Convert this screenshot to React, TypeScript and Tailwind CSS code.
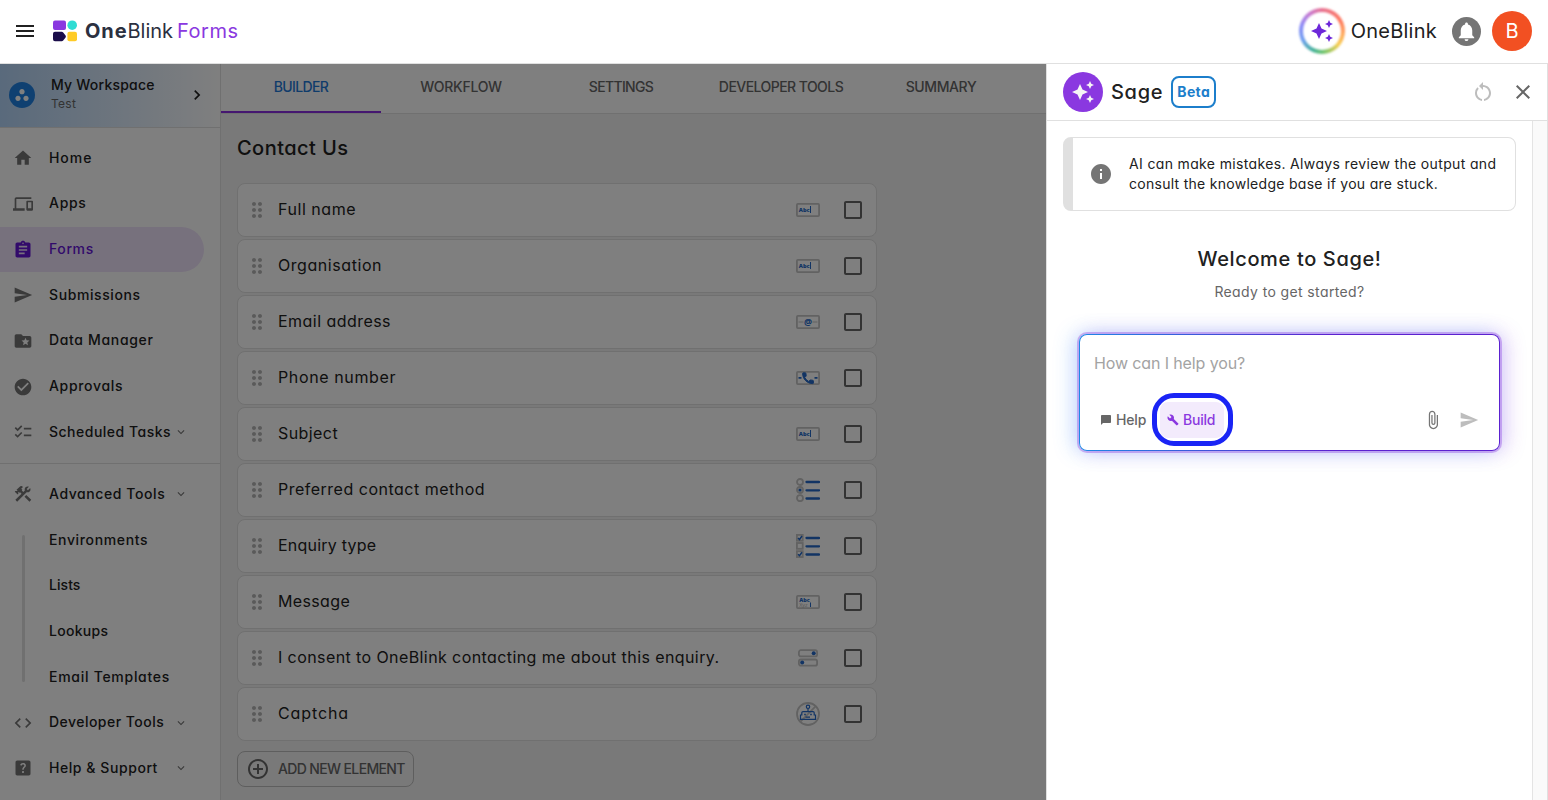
import type { ReactNode } from "react";
import type { IconType } from "react-icons";
import {
  MdAddCircleOutline,
  MdAssignment,
  MdAttachFile,
  MdAutoAwesome,
  MdBuild,
  MdChatBubble,
  MdCheckBoxOutlineBlank,
  MdCheckCircle,
  MdChecklist,
  MdChevronRight,
  MdClose,
  MdCode,
  MdConstruction,
  MdDevices,
  MdDragIndicator,
  MdExpandMore,
  MdFolderSpecial,
  MdHelpCenter,
  MdHome,
  MdInfo,
  MdMenu,
  MdNotifications,
  MdRestartAlt,
  MdSend,
  MdWorkspaces,
} from "react-icons/md";

type NavEntry = { label: string; tracking: string; icon?: IconType; active?: boolean; expandable?: boolean };

const primaryNav: NavEntry[] = [
  { label: "Home", tracking: "tracking-[0.95px]", icon: MdHome },
  { label: "Apps", tracking: "tracking-[0.7px]", icon: MdDevices },
  { label: "Forms", tracking: "tracking-[0.6px]", icon: MdAssignment, active: true },
  { label: "Submissions", tracking: "tracking-[0.6px]", icon: MdSend },
  { label: "Data Manager", tracking: "tracking-[0.66px]", icon: MdFolderSpecial },
  { label: "Approvals", tracking: "tracking-[0.68px]", icon: MdCheckCircle },
  { label: "Scheduled Tasks", tracking: "tracking-[0.5px]", icon: MdChecklist, expandable: true },
];

const advancedChildren: NavEntry[] = [
  { label: "Environments", tracking: "tracking-[0.64px]" },
  { label: "Lists", tracking: "tracking-[0.05px]" },
  { label: "Lookups", tracking: "tracking-[0.3px]" },
  { label: "Email Templates", tracking: "tracking-[0.72px]" },
];

const tabs = [
  { label: "BUILDER", tracking: "tracking-[-0.64px]", active: true },
  { label: "WORKFLOW", tracking: "tracking-[-0.28px]" },
  { label: "SETTINGS", tracking: "tracking-[-0.66px]" },
  { label: "DEVELOPER TOOLS", tracking: "tracking-[-0.55px]" },
  { label: "SUMMARY", tracking: "tracking-[-0.4px]" },
];

const GREY = "#c4c4c4";
const BLUE = "#2468c8";

function FieldBox({ children }: { children: ReactNode }) {
  return (
    <svg width="24" height="24" viewBox="0 0 24 24">
      <rect x="0.9" y="5.9" width="22.2" height="12.2" rx="1" fill="none" stroke={GREY} strokeWidth="1.8" />
      {children}
    </svg>
  );
}

function TextFieldIcon() {
  return (
    <FieldBox>
      <text x="2.8" y="13.7" fontSize="5.7" fontWeight="800" fill={BLUE} className="font-['Open_Sans']">Abc</text>
      <rect x="14" y="8" width="1" height="7" fill={BLUE} />
    </FieldBox>
  );
}

function EmailIcon() {
  return (
    <FieldBox>
      <path d="M2.5 12H7.5M16.5 12H21.5" stroke={GREY} strokeWidth="1.2" />
      <text x="12" y="14.7" fontSize="9" fontWeight="700" textAnchor="middle" fill={BLUE} className="font-['Open_Sans']">@</text>
    </FieldBox>
  );
}

function PhoneIcon() {
  return (
    <FieldBox>
      <path d="M2.5 11.8H5.5M18.5 11.8H21.5" stroke={BLUE} strokeWidth="1.8" />
      <path
        transform="translate(4.8 5) scale(0.6)"
        d="M6.62 10.79c1.44 2.83 3.76 5.14 6.59 6.59l2.2-2.2c.27-.27.67-.36 1.02-.24 1.12.37 2.33.57 3.57.57.55 0 1 .45 1 1V20c0 .55-.45 1-1 1-9.39 0-17-7.61-17-17 0-.55.45-1 1-1h3.5c.55 0 1 .45 1 1 0 1.25.2 2.45.57 3.57.11.35.03.74-.25 1.02l-2.2 2.2z"
        fill={BLUE}
        stroke={BLUE}
        strokeWidth="1.6"
      />
    </FieldBox>
  );
}

function OptionLines() {
  return <path d="M10.5 4H23M10.5 12.3H23M10.5 20.5H23" stroke={BLUE} strokeWidth="2.3" strokeLinecap="round" />;
}

function RadioIcon() {
  return (
    <svg width="24" height="24" viewBox="0 0 24 24">
      <g fill="none" stroke={GREY} strokeWidth="1.8">
        <circle cx="4" cy="4" r="3" />
        <circle cx="4" cy="12" r="3" />
        <circle cx="4" cy="20.2" r="3" />
      </g>
      <circle cx="4" cy="12" r="1.6" fill={BLUE} />
      <OptionLines />
    </svg>
  );
}

function ChecklistIcon() {
  return (
    <svg width="24" height="24" viewBox="0 0 24 24">
      <g fill="none" stroke={GREY} strokeWidth="1.8">
        <rect x="0.9" y="0.9" width="5.8" height="5.8" />
        <rect x="0.9" y="9" width="5.8" height="5.8" />
        <rect x="0.9" y="17.2" width="5.8" height="5.8" />
      </g>
      <path d="M2 4l1.500 1.500L6 2M2 20.200l1.500 1.500L6 18.200" fill="none" stroke={BLUE} strokeWidth="1.5" />
      <OptionLines />
    </svg>
  );
}

function MultilineIcon() {
  return (
    <FieldBox>
      <text x="3.2" y="11.8" fontSize="5.5" fontWeight="800" fill={BLUE} className="font-['Open_Sans']">Abc</text>
      <text x="3.2" y="16.8" fontSize="5.5" fill="#b0b0b0" className="font-['Open_Sans']">Xyz</text>
      <rect x="14" y="12.5" width="1" height="4.5" fill={BLUE} />
    </FieldBox>
  );
}

function ToggleIcon() {
  return (
    <svg width="24" height="24" viewBox="0 0 24 24">
      <g fill="none" stroke={GREY} strokeWidth="1.8">
        <rect x="2.9" y="4.2" width="18.2" height="6.2" rx="2" />
        <rect x="2.9" y="13.5" width="18.2" height="6.2" rx="2" />
      </g>
      <circle cx="17.7" cy="7.3" r="2" fill={BLUE} />
      <circle cx="6.2" cy="16.6" r="2" fill={BLUE} />
    </svg>
  );
}

function CaptchaIcon() {
  return (
    <svg width="24" height="24" viewBox="0 0 24 24" fill="none">
      <circle cx="12" cy="12" r="11" stroke={GREY} strokeWidth="1.8" />
      <path d="M19.8 4.2L4.2 19.8" stroke={GREY} strokeWidth="1.8" />
      <g stroke={BLUE} strokeWidth="1.2">
        <circle cx="12" cy="4.800" r="1.700" />
        <path d="M12 6.500V9.600M7 9.600H17Q18.200 9.600 18.200 10.800V13H19.500V17.300H4.500V13H5.800V10.800Q5.800 9.600 7 9.600ZM9.500 15.200H14" />
      </g>
      <path d="M8.200 12.500H9.800M14.200 12.500H15.800" stroke={BLUE} strokeWidth="1.5" />
    </svg>
  );
}

const fields = [
  { label: "Full name", tracking: "tracking-[0.55px]", Icon: TextFieldIcon },
  { label: "Organisation", tracking: "tracking-[0.56px]", Icon: TextFieldIcon },
  { label: "Email address", tracking: "tracking-[0.46px]", Icon: EmailIcon },
  { label: "Phone number", tracking: "tracking-[0.62px]", Icon: PhoneIcon },
  { label: "Subject", tracking: "tracking-[0.42px]", Icon: TextFieldIcon },
  { label: "Preferred contact method", tracking: "tracking-[0.5px]", Icon: RadioIcon },
  { label: "Enquiry type", tracking: "tracking-[0.22px]", Icon: ChecklistIcon },
  { label: "Message", tracking: "tracking-[0.36px]", Icon: MultilineIcon },
  { label: "I consent to OneBlink contacting me about this enquiry.", tracking: "tracking-[0.41px]", Icon: ToggleIcon },
  { label: "Captcha", tracking: "tracking-[0.9px]", Icon: CaptchaIcon },
];

function Logo() {
  return (
    <svg width="24" height="22" viewBox="0 0 24 22">
      <rect x="0" y="0.5" width="13" height="9.5" rx="2" fill="#8a38e0" />
      <circle cx="19.2" cy="5.2" r="4.8" fill="#2fdcd3" />
      <path d="M2 11.700H8.700Q9.600 11.700 10.200 12.400L12.600 15.500Q13.200 16.500 12.600 17.400L10.200 20.400Q9.600 21.200 8.700 21.200H2Q0 21.200 0 19.200V13.700Q0 11.700 2 11.700Z" fill="#1b0d4a" />
      <rect x="14.4" y="11.7" width="9.600" height="9.500" rx="2" fill="#ffcb26" />
    </svg>
  );
}

function Header() {
  return (
    <header className="flex h-16 shrink-0 items-center border-b border-[#e0e0e0] bg-white pr-4 pb-px pl-[13px]">
      <MdMenu className="size-6 text-[#212121]" />
      <div className="ml-4 flex items-center gap-2">
        <Logo />
        <div className="flex pb-px text-[20px] leading-6 text-[#2b3040]">
          <span className="font-bold tracking-[0.9px]">One</span>
          <span className="tracking-[0px]">Blink</span>
          <span className="ml-[4px] tracking-[0.5px] text-[#8a38e0]">Forms</span>
        </div>
      </div>
      <div className="ml-auto flex items-center">
        <div className="relative flex size-[46px] items-center justify-center rounded-full">
          <div className="absolute inset-0 rounded-full bg-[conic-gradient(from_0deg,#e8708f,#ff7a60_60deg,#ffab5c_100deg,#f7cf52_130deg,#72c56b_175deg,#45b39a_205deg,#6f9ff0_245deg,#8c8cf8_285deg,#c97ad0_325deg,#e8708f)] blur-[1px]" />
          <div className="absolute inset-[4px] rounded-full bg-white blur-[1px]" />
          <MdAutoAwesome className="relative size-6 text-[#6d28d9]" />
        </div>
        <span className="ml-1.5 pb-px text-[20px] leading-6 tracking-[0.25px] text-[#212121]">OneBlink</span>
        <div className="ml-[15px] flex size-[29px] items-center justify-center rounded-full bg-[#757575]">
          <MdNotifications className="size-[23px] text-white" />
        </div>
        <div className="ml-[11px] flex size-10 items-center justify-center rounded-full bg-[#f25022] text-[20px] text-white">B</div>
      </div>
    </header>
  );
}

function NavRow({ label, tracking, icon: Icon, active, expandable }: NavEntry) {
  return (
    <div
      className={`mr-4 flex h-[45.67px] items-center rounded-r-full ${active ? "bg-[#efe2fb] text-[#6415d6]" : "text-[#212121]"}`}
    >
      <div className="flex w-[49px] pl-[13px]">
        {Icon && <Icon className={`size-5 ${active ? "" : "text-[#757575]"}`} />}
      </div>
      <span className={`pb-0.5 text-[14px] font-medium whitespace-nowrap ${tracking}`}>{label}</span>
      {expandable && <MdExpandMore className="mr-4 ml-auto size-3.5 text-[#757575]" />}
    </div>
  );
}

function Sidebar() {
  return (
    <aside className="flex w-[221px] shrink-0 flex-col border-r border-[#e0e0e0] bg-white">
      <div className="flex h-16 shrink-0 items-center border-b border-[#e0e0e0] bg-[linear-gradient(90deg,#b3d4f8_0%,#ffffff_100%)] pb-px pl-[9px]">
        <div className="flex size-[26px] items-center justify-center rounded-full bg-[#1e80e2]">
          <MdWorkspaces className="size-4 text-white" />
        </div>
        <div className="ml-4 flex flex-col pb-0.5">
          <span className="text-[14px] leading-5 font-medium tracking-[0.22px] text-[#212121]">My Workspace</span>
          <span className="text-[12px] leading-[18px] tracking-[0.25px] text-[#666666]">Test</span>
        </div>
        <MdChevronRight className="mr-[13px] ml-auto size-5 text-[#212121]" />
      </div>
      <nav className="pt-[7.4px] pb-[7.6px]">
        {primaryNav.map((entry) => <NavRow key={entry.label} {...entry} />)}
      </nav>
      <nav className="border-t border-[#e0e0e0] py-2">
        <NavRow label="Advanced Tools" tracking="tracking-[0.58px]" icon={MdConstruction} expandable />
        <div className="relative">
          <div className="absolute top-[18px] bottom-[18px] left-[22px] w-[3px] rounded-full bg-[#e0e0e0]" />
          {advancedChildren.map((entry) => <NavRow key={entry.label} {...entry} />)}
        </div>
        <NavRow label="Developer Tools" tracking="tracking-[0.47px]" icon={MdCode} expandable />
        <NavRow label="Help & Support" tracking="tracking-[0.56px]" icon={MdHelpCenter} expandable />
      </nav>
    </aside>
  );
}

function Builder() {
  return (
    <main className="flex min-w-0 flex-1 flex-col bg-[#f2f2f2]">
      <div className="flex h-[50px] shrink-0 border-b border-[#e0e0e0] bg-white">
        {tabs.map((tab) => (
          <div
            key={tab.label}
            className={`flex w-40 items-center justify-center border-b-2 pb-0.5 text-[14px] font-medium whitespace-nowrap ${tab.tracking} ${tab.active ? "border-[#8a2ee0] text-[#1e78d6]" : "border-transparent text-[#666666]"}`}
          >
            {tab.label}
          </div>
        ))}
      </div>
      <div className="px-4 pt-5">
        <h1 className="text-[20px] leading-7 font-medium tracking-[0.45px] text-[#212121]">Contact Us</h1>
        <div className="mt-[21px] flex w-[640px] flex-col gap-0.5">
          {fields.map(({ label, tracking, Icon }) => (
            <div key={label} className="flex h-[54px] items-center rounded-lg border border-[#e0e0e0] bg-white pr-[11px] pl-[7px]">
              <MdDragIndicator className="size-6 text-[#b5b5b5]" />
              <span className={`ml-[9px] pb-[3px] text-[16px] text-[#212121] ${tracking}`}>{label}</span>
              <div className="ml-auto flex items-center gap-[21px]">
                <Icon />
                <MdCheckBoxOutlineBlank className="size-6 text-[#666666]" />
              </div>
            </div>
          ))}
        </div>
        <button className="mt-[10px] flex h-9 w-[177px] items-center rounded-lg border border-[#bdbdbd] pl-2 text-[#666666]">
          <MdAddCircleOutline className="size-6" />
          <span className="ml-2 pb-px text-[14px] font-medium tracking-[-0.64px] whitespace-nowrap">ADD NEW ELEMENT</span>
        </button>
      </div>
    </main>
  );
}

function PromptBox() {
  return (
    <div className="mx-4 mt-8 rounded-lg bg-[linear-gradient(90deg,#1e88e5,#5b21d0_60%,#5b21d0)] p-px shadow-[0_0_0_2px_rgba(138,56,224,0.35),-6px_0_20px_rgba(60,150,255,0.28),6px_0_20px_rgba(138,56,224,0.25)]">
      <div className="flex h-[115px] flex-col rounded-[7px] bg-white pt-[17px]">
        <span className="pl-3.5 text-[16px] leading-[22px] tracking-[-0.12px] text-[#a3a3a3]">How can I help you?</span>
        <div className="mt-[28px] flex h-9 items-center pr-5 pl-[14px]">
          <div className="flex w-[66px] items-center gap-1 pl-[6px] text-[#666666]">
            <MdChatBubble className="size-3" />
            <span className="pb-0.5 text-[14px] font-medium tracking-[-0.15px]">Help</span>
          </div>
          <div className="relative flex h-9 w-16 items-center gap-1 rounded-lg bg-[#f3ebfc] pl-[7px] text-[#8a38e0]">
            <MdBuild className="size-3" />
            <span className="pb-0.5 text-[14px] font-medium tracking-[-0.2px]">Build</span>
            <div className="absolute -top-[9px] -right-[9px] -bottom-2 -left-2 rounded-[22px] border-[5px] border-[#1a24f5]" />
          </div>
          <MdAttachFile className="ml-auto size-5 text-[#757575]" />
          <MdSend className="ml-4 size-5 text-[#bdbdbd]" />
        </div>
      </div>
    </div>
  );
}

function SagePanel() {
  return (
    <section className="absolute top-[63px] right-0 bottom-0 flex w-[502px] flex-col border-x border-t border-[#e0e0e0] bg-white">
      <div className="flex h-[57px] shrink-0 items-center border-b border-[#e0e0e0] pr-3 pl-4">
        <div className="flex size-10 items-center justify-center rounded-full bg-[#8a38e0]">
          <MdAutoAwesome className="size-6 text-[#f5f5f5]" />
        </div>
        <h2 className="ml-2 text-[20px] font-medium tracking-[0.7px] text-[#212121]">Sage</h2>
        <div className="ml-2 flex h-8 w-[45px] items-center justify-center rounded-lg border-2 border-[#1c7ecb] pb-px text-[14px] font-bold tracking-[0.4px] text-[#1c7ecb]">
          Beta
        </div>
        <MdRestartAlt className="ml-auto size-6 text-[#bdbdbd]" />
        <MdClose className="ml-4 size-6 text-[#666666]" />
      </div>
      <div className="flex min-h-0 flex-1">
        <div className="flex min-w-0 flex-1 flex-col px-4 pt-4">
          <div className="flex h-[74px] items-center rounded-lg border border-l-[10px] border-[#e0e0e0]">
            <MdInfo className="ml-4 size-6 text-[#757575]" />
            <div className="ml-4 flex flex-col text-[14px] leading-5 whitespace-nowrap text-[#212121]">
              <span className="tracking-[0.35px]">AI can make mistakes. Always review the output and</span>
              <span className="tracking-[0.28px]">consult the knowledge base if you are stuck.</span>
            </div>
          </div>
          <h3 className="mt-[34px] text-center text-[20px] leading-7 font-medium tracking-[0.64px] text-[#212121]">Welcome to Sage!</h3>
          <p className="mt-[9px] text-center text-[14px] leading-5 tracking-[0.38px] text-[#666666]">Ready to get started?</p>
          <PromptBox />
        </div>
        <div className="w-[15px] shrink-0 border-l border-[#e4e4e4] bg-[#fafafa]" />
      </div>
    </section>
  );
}

export default function App() {
  return (
    <div className="relative flex h-[800px] w-[1548px] flex-col overflow-hidden font-['Inter',sans-serif] [font-feature-settings:'cv11']">
      <Header />
      <div className="relative flex min-h-0 flex-1 overflow-hidden">
        <Sidebar />
        <Builder />
        <div className="absolute inset-0 bg-black/50" />
      </div>
      <SagePanel />
    </div>
  );
}
